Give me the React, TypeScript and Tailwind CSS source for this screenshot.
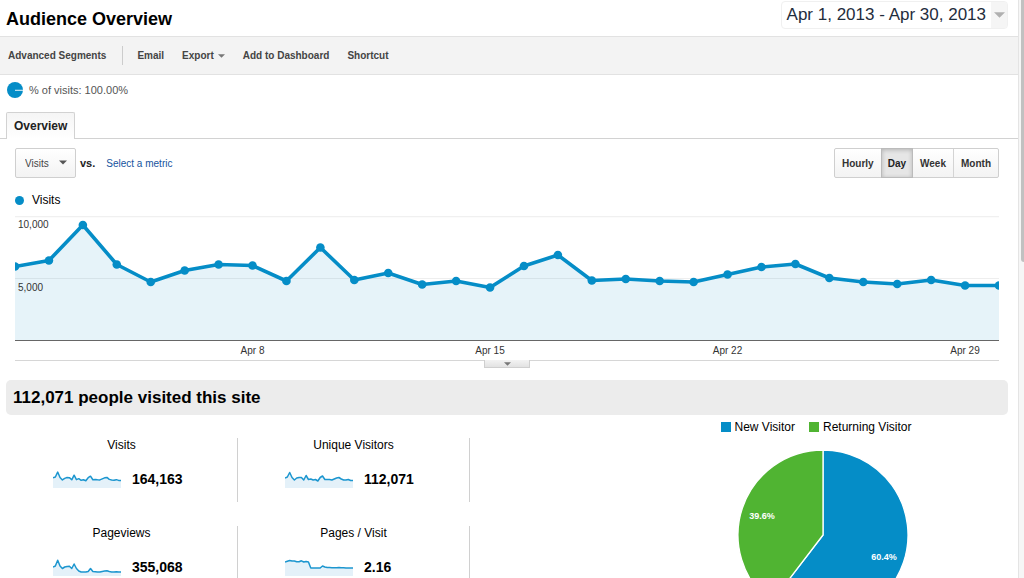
import React from "react";

const VISITS = [
  74, 80, 115.5, 76, 58.5, 70, 76, 75, 59.5, 93, 60.5, 67.5, 56, 59.5, 53, 74.5, 85.5, 60, 61.5, 59.5,
  58.5, 66, 73.5, 76.5, 62.5, 58.5, 56.5, 60.5, 55, 55,
];
const VISIT_TREND = VISITS.map((v) => v * 0.138);
const UNIQUE_TREND = [
  10, 11, 15.5, 10.5, 8, 10, 10.5, 10.5, 8, 12.5, 8.5, 9, 8, 8.5, 7, 10.5, 12, 8.5, 8.5, 8.5, 8, 9, 10,
  10.5, 9, 8, 8, 8.5, 7.5, 7.5,
];
const PAGEVIEW_TREND = [
  9, 10, 15.7, 10, 7.5, 9, 9.5, 9.7, 7.5, 12, 7.5, 5, 4, 4, 4, 4.5, 7.5, 4.5, 4.3, 4, 4, 4.5, 5, 5.3, 4.5,
  4, 4, 4.3, 4, 4,
];
const PAGES_TREND = [
  14, 14.8, 15.5, 15, 15, 14.2, 14.2, 15.2, 14, 14.6, 14, 8, 8, 8, 8, 8, 10, 9, 8.6, 8.4, 8.2, 8.2, 8.2,
  8.4, 8.2, 8.2, 8, 8, 8, 8,
];

const METRICS = [
  { label: "Visits", value: "164,163", trend: VISIT_TREND },
  { label: "Unique Visitors", value: "112,071", trend: UNIQUE_TREND },
  { label: "Pageviews", value: "355,068", trend: PAGEVIEW_TREND },
  { label: "Pages / Visit", value: "2.16", trend: PAGES_TREND },
];

const RANGES = ["Hourly", "Day", "Week", "Month"];

function toPoints(values: number[], width: number, base: number) {
  return values
    .map((v, i) => `${((i * width) / (values.length - 1)).toFixed(2)},${(base - v).toFixed(2)}`)
    .join(" ");
}

function Caret({ className }: { className: string }) {
  return (
    <svg viewBox="0 0 8 4" className={className} aria-hidden="true">
      <path d="M0 0h8L4 4z" fill="currentColor" />
    </svg>
  );
}

function Header() {
  return (
    <header className="flex h-9 items-start justify-between pr-[10px] pl-[6px]">
      <h1 className="pt-[7px] text-[18px] leading-6 font-bold text-black">Audience Overview</h1>
      <button className="mt-px flex h-7 items-stretch overflow-hidden rounded border border-[#f0f0f0] bg-white text-[17px] text-[#1f2d3d]">
        <span className="flex items-center px-[5px]">Apr 1, 2013 - Apr 30, 2013</span>
        <span className="flex w-4 items-center justify-center bg-[#f5f5f5] text-[#b0b0b0]">
          <Caret className="h-[6px] w-[11px]" />
        </span>
      </button>
    </header>
  );
}

function Toolbar() {
  return (
    <nav className="flex h-[39px] items-center border-y border-[#e2e2e2] bg-[#f3f3f3] pl-2 text-[10px] font-bold text-[#444]">
      <button>Advanced Segments</button>
      <span className="mr-[14px] ml-4 h-[19px] w-px bg-[#ccc]" />
      <div className="flex items-center gap-[18px]">
        <button>Email</button>
        <button className="flex items-center gap-1">
          Export
          <Caret className="h-[4px] w-[7px] text-[#777]" />
        </button>
        <button>Add to Dashboard</button>
        <button>Shortcut</button>
      </div>
    </nav>
  );
}

function VisitsChart() {
  const line = toPoints(VISITS, 984, 124.5);
  const weeks = [
    { label: "Apr 8", x: 237.5 },
    { label: "Apr 15", x: 475 },
    { label: "Apr 22", x: 712.5 },
    { label: "Apr 29", x: 950 },
  ];
  return (
    <svg viewBox="0 0 984 144" className="block w-full" role="img" aria-label="Visits per day">
      <path d="M0 .5H984" stroke="#f0f0f0" strokeWidth="1.5" />
      <path d="M0 62.5H984" stroke="#eeeeee" />
      <polygon points={`0,124.5 ${line} 984,124.5`} fill="#058dc7" fillOpacity="0.1" />
      <path d="M0 124.5H984" stroke="#666" strokeWidth="1.2" />
      <polyline points={line} fill="none" stroke="#058dc7" strokeWidth="3.6" strokeLinejoin="round" />
      {VISITS.map((v, i) => (
        <circle key={i} cx={(i * 984) / 29} cy={124.5 - v} r="4.3" fill="#058dc7" />
      ))}
      <g fontSize="10" fill="#333">
        <text x="3" y="12">10,000</text>
        <text x="3" y="75">5,000</text>
        {weeks.map((w) => (
          <text key={w.label} x={w.x} y="138" textAnchor="middle">
            {w.label}
          </text>
        ))}
      </g>
    </svg>
  );
}

function Sparkline({ values }: { values: number[] }) {
  const line = toPoints(values, 68, 17);
  return (
    <svg viewBox="0 0 68 17" className="h-[17px] w-[68px]" aria-hidden="true">
      <polygon points={`0,17 ${line} 68,17`} fill="#e4f1f9" />
      <polyline points={line} fill="none" stroke="#1c96cf" strokeWidth="1.5" strokeLinejoin="round" />
    </svg>
  );
}

function VisitorPie() {
  return (
    <svg viewBox="0 0 184 172" className="mt-[14px] h-[172px] w-[184px]" role="img" aria-label="New and returning visitors">
      <g stroke="#fff" strokeWidth="1.3" strokeLinejoin="round">
        <path d="M99 86V1A85 85 0 1 1 47.33 153.49Z" fill="#058dc7" />
        <path d="M99 86L47.33 153.49A85 85 0 0 1 99 1Z" fill="#50b432" />
      </g>
      <g fontSize="9" fontWeight="bold" fill="#fff" textAnchor="middle">
        <text x="38" y="70">39.6%</text>
        <text x="160" y="111">60.4%</text>
      </g>
    </svg>
  );
}

export default function App() {
  return (
    <div className="flex h-screen overflow-hidden bg-white font-['Liberation_Sans',Arial,sans-serif] text-black">
      <main className="min-w-0 flex-1 overflow-y-auto [scrollbar-width:none]">
        <Header />
        <Toolbar />

        <div className="flex h-[30px] items-center gap-[6px] pl-[7px] text-[11px] text-[#555]">
          <svg viewBox="0 0 16 16" className="size-4" aria-hidden="true">
            <circle cx="8" cy="8" r="8" fill="#058dc7" />
            <path d="M8 8.3h8" stroke="#fff" strokeOpacity=".85" strokeWidth="1.1" />
          </svg>
          % of visits: 100.00%
        </div>

        <div className="mt-[7px] flex border-b border-[#d2d2d2] pl-[6px]">
          <button className="-mb-px h-[27px] rounded-t-xs border border-b-0 border-[#d2d2d2] bg-linear-to-b from-[#f5f5f5] to-white px-[7px] text-[12px] font-bold text-[#222]">
            Overview
          </button>
        </div>

        <div className="mt-[9px] flex items-center justify-between pr-[19px] pl-[15px]">
          <div className="flex items-center">
            <div className="relative">
              <select
                aria-label="Metric"
                className="block h-[30px] w-[61px] appearance-none rounded-xs border border-[#cfcfcf] bg-linear-to-b from-white to-[#f3f3f3] pl-[9px] text-[10px] text-[#444]"
              >
                <option>Visits</option>
              </select>
              <Caret className="pointer-events-none absolute top-[12px] right-[9px] h-[5px] w-[8px] text-[#555]" />
            </div>
            <span className="ml-1 text-[11px] font-bold text-[#222]">vs.</span>
            <a href="#metric" className="ml-[11px] text-[10px] text-[#15539e]">
              Select a metric
            </a>
          </div>
          <div className="flex h-[30px] rounded-xs border border-[#cfcfcf] bg-linear-to-b from-white to-[#f3f3f3] text-[10px] font-bold text-[#333]">
            {RANGES.map((r) => (
              <button
                key={r}
                aria-pressed={r === "Day"}
                className={
                  r === "Day"
                    ? "-my-px border border-[#bbb] bg-[#e6e6e6] px-[6px] text-[#222] shadow-[inset_0_1px_4px_rgba(0,0,0,0.22)]"
                    : r === "Week"
                      ? "border-r border-[#d4d4d4] px-[7px]"
                      : "px-[7px]"
                }
              >
                {r}
              </button>
            ))}
          </div>
        </div>

        <section className="pr-[19px] pl-[15px]">
          <div className="mt-[14px] mb-2 flex h-4 items-center gap-2 text-[12px]">
            <span className="size-[9px] rounded-full bg-[#058dc7]" />
            Visits
          </div>
          <VisitsChart />
          <div className="flex justify-center border-t border-[#d6d6d6]">
            <button
              aria-label="Show annotations"
              className="-mt-px flex h-[8px] w-[46px] items-center justify-center border border-t-0 border-[#cfcfcf] bg-linear-to-b from-[#f3f3f3] to-[#e2e2e2] text-[#777]"
            >
              <Caret className="h-[4px] w-[7px]" />
            </button>
          </div>
        </section>

        <h2 className="mt-3 mr-[10px] ml-[6px] flex h-[35px] items-center rounded-[5px] bg-[#ececec] pt-px pl-[7px] text-[17px] font-bold">
          112,071 people visited this site
        </h2>

        <div className="flex justify-between pr-[10px] pl-[6px]">
          <div className="mt-[23px] grid grid-cols-[232px_232px] content-start gap-y-6">
            {METRICS.map((m) => (
              <div key={m.label} className="h-16 border-r border-[#d0d0d0]">
                <h3 className="text-center text-[12px] leading-[14px]">{m.label}</h3>
                <div className="mt-[17px] flex items-center gap-[11px] pl-[47px]">
                  <Sparkline values={m.trend} />
                  <strong className="text-[14px] leading-5">{m.value}</strong>
                </div>
              </div>
            ))}
          </div>
          <div className="flex w-96 flex-col items-center pt-[4px]">
            <div className="flex items-center gap-[14px] text-[12px] leading-4">
              <span className="flex items-center gap-1">
                <span className="size-[10px] bg-[#058dc7]" />
                New Visitor
              </span>
              <span className="flex items-center gap-1">
                <span className="size-[10px] bg-[#50b432]" />
                Returning Visitor
              </span>
            </div>
            <VisitorPie />
          </div>
        </div>
      </main>

      <div className="flex w-[6px] justify-end border-l border-[#e4e4e4] bg-[#f6f6f6]">
        <div className="h-[262px] w-[3px] rounded-bl-full bg-[#c1c1c1]" />
      </div>
    </div>
  );
}
